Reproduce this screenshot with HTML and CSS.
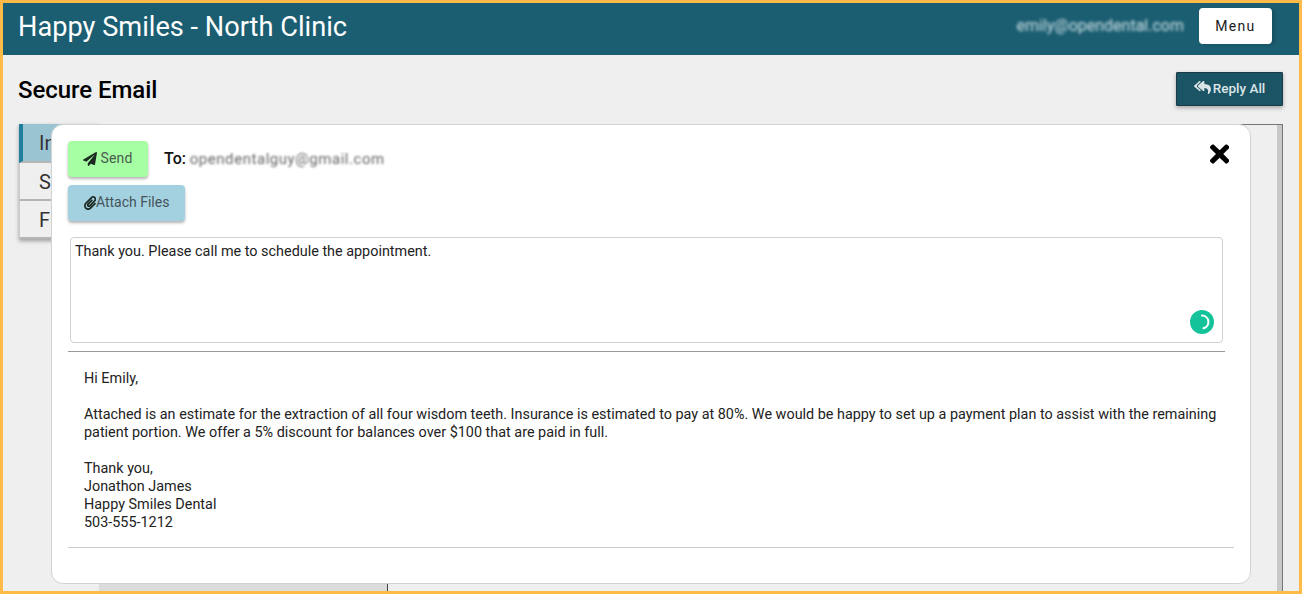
FILE: index.html
```html
<!DOCTYPE html>
<html lang="en">
<head>
<meta charset="utf-8">
<title>Secure Email</title>
<link rel="stylesheet" href="styles.css">
</head>
<body>
<div class="app">
  <header class="topbar">
    <h1 class="clinic">Happy Smiles - North Clinic</h1>
    <div class="account">
      <span class="account-email">emily@opendental.com</span>
      <button class="menu-btn">Menu</button>
    </div>
  </header>
  <div class="titlebar">
    <h2 class="page-title">Secure Email</h2>
    <button class="reply-all">
      <svg class="reply-icon" viewBox="0 0 576 512"><path d="M136.309 189.836L312.313 37.851C327.72 24.546 352 35.348 352 56.015v82.763c129.182 10.231 224 52.212 224 183.548 0 61.441-39.582 122.309-83.333 154.132-13.653 9.931-33.111-2.533-28.077-18.631 38.512-123.162-3.922-169.482-112.59-182.015v84.175c0 20.701-24.3 31.453-39.687 18.164L136.309 226.164c-11.071-9.561-11.086-26.753 0-36.328zm-128 36.328L184.313 378.15C199.7 391.439 224 380.687 224 359.986v-15.818l-108.606-93.785A55.96 55.96 0 0 1 96 207.998a55.953 55.953 0 0 1 19.393-42.38L224 71.832V56.015c0-20.667-24.28-31.469-39.687-18.164L8.309 189.836c-11.086 9.575-11.071 26.767 0 36.328z"/></svg>
      Reply All
    </button>
  </div>
  <div class="workspace">
    <nav class="tabs">
      <div class="tab tab-active">Inbox</div>
      <div class="tab">Sent</div>
      <div class="tab">Files</div>
    </nav>
    <div class="list-pane"></div>
    <div class="detail-pane"><div class="scrollbar"></div></div>
  </div>
  <section class="modal">
    <button class="close-btn" aria-label="Close">
      <svg viewBox="0 0 352 512"><path d="M242.72 256l100.07-100.07c12.28-12.28 12.28-32.19 0-44.48l-22.24-22.24c-12.28-12.28-32.19-12.28-44.48 0L176 189.28 75.93 89.21c-12.28-12.28-32.19-12.28-44.48 0L9.21 111.45c-12.28 12.28-12.28 32.19 0 44.48L109.28 256 9.21 356.07c-12.28 12.28-12.28 32.19 0 44.48l22.24 22.24c12.28 12.28 32.2 12.28 44.48 0L176 322.72l100.07 100.07c12.28 12.28 32.2 12.28 44.48 0l22.24-22.24c12.28-12.28 12.28-32.19 0-44.48L242.72 256z"/></svg>
    </button>
    <div class="send-row">
      <button class="btn btn-send">
        <svg class="plane-icon" viewBox="0 0 512 512"><path d="M476 3.2L12.5 270.6c-18.1 10.4-15.8 35.6 2.2 43.2L121 358.4l287.3-253.2c5.5-4.9 13.3 2.6 8.6 8.3L176 407v80.5c0 23.6 28.5 32.9 42.5 15.8L282 426l124.6 52.2c14.2 6 30.4-2.9 33-18.2l72-432C515 7.8 493.3-6.8 476 3.2z"/></svg>
        <span>Send</span>
      </button>
      <div class="recipient"><strong>To:</strong> <span class="recipient-email">opendentalguy@gmail.com</span></div>
    </div>
    <button class="btn btn-attach">
      <svg class="clip-icon" viewBox="0 0 448 512"><path d="M43.246 466.142c-58.43-60.289-57.341-157.511 1.386-217.581L254.392 34c44.316-45.332 116.351-45.336 160.671 0 43.89 44.894 43.943 117.329 0 162.276L232.214 383.128c-29.855 30.537-78.633 30.111-107.982-.998-28.275-29.97-27.368-77.473 1.452-106.953l143.743-146.835c6.182-6.314 16.312-6.422 22.626-.241l22.861 22.379c6.315 6.182 6.422 16.312.241 22.626L171.427 319.927c-4.932 5.045-5.236 13.428-.648 18.292 4.372 4.634 11.245 4.711 15.688.165l182.849-186.851c19.613-20.062 19.613-52.725-.011-72.798-19.189-19.627-49.957-19.637-69.154 0L90.39 293.295c-34.763 35.56-35.299 93.12-1.191 128.313 34.01 35.093 88.985 35.137 123.058.286l172.06-175.999c6.177-6.319 16.307-6.433 22.626-.256l22.877 22.364c6.319 6.177 6.434 16.307.256 22.626l-172.06 175.998c-59.576 60.938-155.943 60.216-214.77-.485z"/></svg><span>Attach Files</span>
    </button>
    <div class="compose">
      Thank you. Please call me to schedule the appointment.
      <svg class="assist" viewBox="0 0 24 24"><circle cx="12" cy="12" r="12"/><path d="M12 5.500a6.500 6.500 0 0 1 1.500 12.800"/></svg>
    </div>
    <hr class="rule-strong">
    <div class="message">
      <p>Hi Emily,</p>
      <p>Attached is an estimate for the extraction of all four wisdom teeth. Insurance is estimated to pay at 80%. We would be happy to set up a payment plan to assist with the remaining patient portion. We offer a 5% discount for balances over $100 that are paid in full.</p>
      <p>Thank you,<br>Jonathon James<br>Happy Smiles Dental<br>503-555-1212</p>
    </div>
    <hr class="rule-light">
  </section>
</div>
</body>
</html>
```
FILE: styles.css
```css
* { box-sizing: border-box; }
html, body { margin: 0; height: 100%; overflow: hidden; }
body { font-family: Roboto, "Liberation Sans", sans-serif; background: #efefef; }
button { font-family: inherit; cursor: pointer; }

.app {
  position: relative;
  height: 594px;
  border: 3px solid #ffba47;
  display: flex;
  flex-direction: column;
  background: #efefef;
}

.topbar {
  height: 52px;
  flex: none;
  background: #1b5e72;
  display: flex;
  align-items: center;
  justify-content: space-between;
  padding: 0 27px 0 15px;
}
.clinic { margin: 0 0 4px; font-size: 27.200px; font-weight: 400; color: #fff; line-height: 44px; }
.account { display: flex; align-items: center; gap: 15px; margin-bottom: 6px; }
.account-email { color: #cfe0e5; font-size: 16px; filter: blur(1.400px); margin-top: -2px; }
.menu-btn {
  width: 73px;
  height: 36px;
  background: #fff;
  border: 0;
  border-radius: 4px;
  font-size: 14px;
  letter-spacing: 1.300px;
  color: #1a1a1a;
  box-shadow: 3px 1px 3px rgba(0, 0, 0, .14);
}

.titlebar {
  height: 69px;
  flex: none;
  display: flex;
  align-items: flex-start;
  justify-content: space-between;
  padding: 17px 16px 0 15px;
}
.page-title { margin: 0; font-size: 24px; font-weight: 500; line-height: 36px; color: #000; letter-spacing: -.05px; }
.reply-all {
  width: 107px;
  height: 34px;
  display: flex;
  align-items: center;
  justify-content: center;
  gap: 2px;
  background: #1b5464;
  border: 1px solid #1a3a48;
  border-radius: 1px;
  color: #dbe5e8;
  font-size: 13.500px;
  font-weight: 500;
  padding: 0 0 2px;
  box-shadow: 0 2px 4px rgba(0, 0, 0, .3);
}
.reply-icon { width: 17px; height: 15px; fill: #dbe5e8; margin-top: -1px; }

.workspace { flex: 1; display: flex; padding: 0 16px 0 16px; min-height: 0; }
.tabs { width: 80px; flex: none; align-self: flex-start; box-shadow: 0 2px 4px rgba(0, 0, 0, .35); }
.tab {
  height: 38px;
  padding-left: 19px;
  font-size: 20px;
  line-height: 38px;
  color: #333;
  background: #efefef;
  border-bottom: 2px solid #b5b5b5;
  border-left: 1px solid #ccc;
}
.tab-active {
  height: 39px;
  background: #9bc4d3;
  border-left: 4px solid #1f7f9c;
  padding-left: 16px;
}
.list-pane { width: 289px; flex: none; background: #dcdcdc; border-right: 1px solid #444; }
.detail-pane { flex: 1; position: relative; border-top: 1px solid #777; border-right: 1px solid #777; }
.scrollbar { position: absolute; top: 0; right: 0; bottom: 0; width: 5px; background: #c8c8c8; }

.modal {
  position: absolute;
  left: 48px;
  top: 121px;
  width: 1200px;
  height: 460px;
  background: #fff;
  border: 1px solid #d2d2d2;
  border-radius: 12px;
  padding: 16px 16px 0;
}
.close-btn {
  position: absolute;
  right: 21px;
  top: 15px;
  width: 19.250px;
  height: 28px;
  padding: 0;
  border: 0;
  background: none;
}
.close-btn svg { width: 19.250px; height: 28px; display: block; fill: #000; }

.send-row { display: flex; align-items: center; gap: 16px; }
.btn {
  height: 36px;
  border: 0;
  border-radius: 4px;
  font-size: 14px;
  color: #4a5a50;
  display: inline-flex;
  align-items: center;
  justify-content: center;
  padding: 0;
  box-shadow: 0 2px 3px rgba(0, 0, 0, .3);
}
.btn span { margin-top: -2px; }
.plane-icon { width: 14px; height: 14px; fill: #1c2a22; flex: none; margin-top: -1px; }
.clip-icon { width: 12.250px; height: 14px; fill: #1c2a22; flex: none; margin-top: -1px; }
.btn-send { width: 80px; background: #a7ffa3; gap: 3px; }
.btn-send span { letter-spacing: .2px; }
.btn-attach { width: 117px; margin-top: 8px; background: #a3d1e0; display: flex; color: #44545a; }
.recipient { font-size: 15px; color: #111; margin-top: -2px; }
.recipient strong { font-weight: 500; font-size: 16px; }
.recipient-email { filter: blur(1.300px); display: inline-block; color: #666; letter-spacing: .55px; }

.compose {
  position: relative;
  margin: 16px 11px 0 2px;
  width: 1153px;
  height: 106px;
  padding: 5px 4px;
  border: 1px solid #d0d0d0;
  border-radius: 4px;
  font-size: 14.400px;
  line-height: 18px;
  color: #222;
}
.assist { position: absolute; right: 8px; bottom: 8px; width: 24px; height: 24px; }
.assist circle { fill: #15c39a; }
.assist path { fill: none; stroke: #fff; stroke-width: 2; stroke-linecap: round; }

.rule-strong { margin: 8px 0 0; width: 1157px; height: 1px; border: 0; background: #999; }
.rule-light { margin: 15px 0 0; width: 1166px; height: 1px; border: 0; background: #ccc; }

.message { padding: 18px 16px 0; font-size: 14.400px; line-height: 18px; color: #222; width: 1166px; }
.message p { margin: 0 0 18px; }
.message p:last-child { margin-bottom: 0; }
```
